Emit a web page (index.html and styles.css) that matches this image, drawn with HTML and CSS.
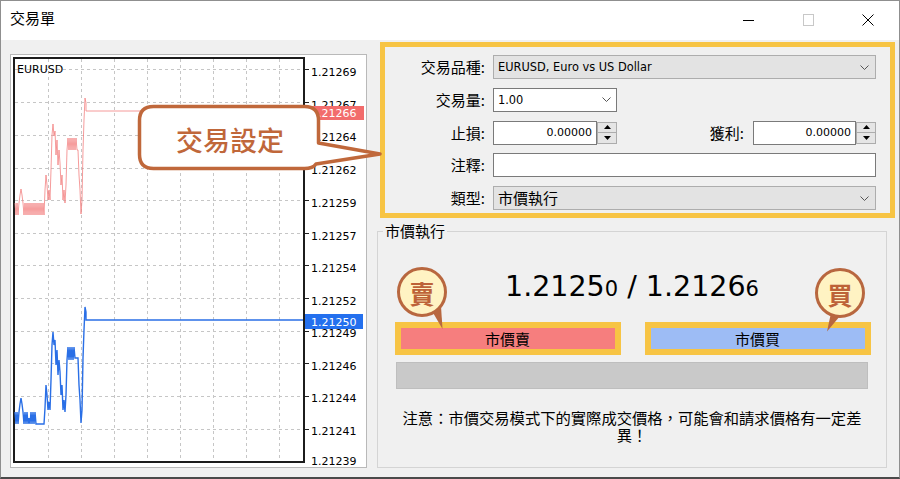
FILE: index.html
```html
<!DOCTYPE html>
<html lang="zh-Hant">
<head>
<meta charset="utf-8">
<title>交易單</title>
<link rel="stylesheet" href="styles.css">
</head>
<body>
<div class="window">
  <header class="titlebar">
    <span class="title">交易單</span>
    <div class="controls">
      <span class="ctl"><svg width="11" height="11" viewBox="0 0 11 11"><path d="M0 5.5H11" stroke="#000" stroke-width="1"/></svg></span>
      <span class="ctl"><svg width="11" height="12" viewBox="0 0 11 12"><rect x="0.5" y="0.5" width="10" height="11" fill="none" stroke="#c8c8c8"/></svg></span>
      <span class="ctl"><svg width="12" height="12" viewBox="0 0 12 12"><path d="M0.5 0.5L11.5 11.5M11.5 0.5L0.5 11.5" stroke="#000" stroke-width="1"/></svg></span>
    </div>
  </header>

  <main class="content">
    <section class="chart-panel">
      <svg class="chart" width="357" height="414" viewBox="10 54 357 414">
        <rect x="10.5" y="54.5" width="356" height="413" fill="#fff" stroke="#b9b9b9"/>
        <path class="grid" d="M48.5 59V461M81.5 59V461M114.5 59V461M147.5 59V461M180.5 59V461M213.5 59V461M246.5 59V461M279.5 59V461M15 69.5H303M15 102.5H303M15 135.5H303M15 168.5H303M15 200.5H303M15 233.5H303M15 265.5H303M15 298.5H303M15 331.5H303M15 363.5H303M15 396.5H303M15 429.5H303"/>
        <rect x="14" y="58" width="290" height="404" fill="none" stroke="#1c1c1c" stroke-width="2"/>
        <path class="ticks" d="M305 69.5H309M305 102.5H309M305 135.5H309M305 168.5H309M305 200.5H309M305 233.5H309M305 265.5H309M305 298.5H309M305 331.5H309M305 363.5H309M305 396.5H309M305 429.5H309"/>
        <text x="17" y="73">EURUSD</text>
        <polyline class="ask" points="15,203 16,215 17,203 18,215 19,203 20,195 21,189 22,195 23,203 24,215 25,203 26,215 27,203 28,215 29,203 30,215 31,203 32,215 33,203 34,215 35,203 36,215 37,203 38,215 39,203 40,215 41,203 42,215 43,203 44,215 45,190 46,175 47,185 48,200 49,190 50,200 51,170 52,135 53,124 54,136 55,131 56,155 57,140 58,165 59,150 60,163 61,185 62,175 63,200 64,190 65,203 66,185 67,150 68,138 69,150 70,138 71,150 72,138 73,150 74,138 75,150 76,138 77,150 78,150 79,175 80,190 81,214 82,200 83,150 84,120 85,98 86,103 86,111 303,111"/>
        <polyline class="bid" points="15,412 16,424 17,412 18,424 19,412 20,404 21,398 22,404 23,412 24,424 25,412 26,424 27,412 28,424 29,418 30,424 31,412 32,424 33,412 34,424 35,412 36,424 44,424 45,408 46,385 47,395 48,410 49,402 50,410 51,380 52,345 53,332 54,345 55,340 56,365 57,350 58,375 59,360 60,372 61,395 62,385 63,410 64,400 65,412 66,395 67,360 68,347 69,360 70,347 71,360 72,347 73,360 74,347 75,358 78,358 79,385 80,400 81,423 82,410 83,358 84,330 85,307 86,312 86,320 303,320"/>
        <text x="311" y="76">1.21269</text>
        <text x="311" y="109">1.21267</text>
        <text x="311" y="141">1.21264</text>
        <text x="311" y="174">1.21262</text>
        <text x="311" y="207">1.21259</text>
        <text x="311" y="240">1.21257</text>
        <text x="311" y="272">1.21254</text>
        <text x="311" y="305">1.21252</text>
        <text x="311" y="337">1.21249</text>
        <text x="311" y="370">1.21246</text>
        <text x="311" y="402">1.21244</text>
        <text x="311" y="435">1.21241</text>
        <text x="311" y="465">1.21239</text>
        <rect x="305" y="106" width="59" height="14" fill="#f26c6c"/>
        <text class="tag" x="311" y="117">1.21266</text>
        <rect x="305" y="314" width="58" height="15" fill="#2470ee"/>
        <text class="tag" x="311" y="325.5">1.21250</text>
      </svg>
    </section>

    <section class="side">
      <div class="settings">
        <label class="lbl">交易品種:</label>
        <div class="select"><span class="val">EURUSD, Euro vs US Dollar</span><svg class="chev" width="9" height="5" viewBox="0 0 9 5"><path d="M0.5 0.5L4.5 4.5L8.5 0.5" fill="none" stroke="#555"/></svg></div>

        <label class="lbl">交易量:</label>
        <div class="field"><div class="combo"><span class="val">1.00</span><svg class="chev" width="9" height="5" viewBox="0 0 9 5"><path d="M0.5 0.5L4.5 4.5L8.5 0.5" fill="none" stroke="#555"/></svg></div></div>

        <label class="lbl">止損:</label>
        <div class="field split">
          <div class="spin first"><span class="num">0.00000</span><span class="spin-btns"><span class="sb"><svg width="7" height="4" viewBox="0 0 7 4"><path d="M3.5 0L7 4H0Z" fill="#000"/></svg></span><span class="sb"><svg width="7" height="4" viewBox="0 0 7 4"><path d="M0 0H7L3.5 4Z" fill="#000"/></svg></span></span></div>
          <label class="lbl inline">獲利:</label>
          <div class="spin"><span class="num">0.00000</span><span class="spin-btns"><span class="sb"><svg width="7" height="4" viewBox="0 0 7 4"><path d="M3.5 0L7 4H0Z" fill="#000"/></svg></span><span class="sb"><svg width="7" height="4" viewBox="0 0 7 4"><path d="M0 0H7L3.5 4Z" fill="#000"/></svg></span></span></div>
        </div>

        <label class="lbl">注釋:</label>
        <div class="textbox"></div>

        <label class="lbl">類型:</label>
        <div class="select"><span class="val cjk">市價執行</span><svg class="chev" width="9" height="5" viewBox="0 0 9 5"><path d="M0.5 0.5L4.5 4.5L8.5 0.5" fill="none" stroke="#555"/></svg></div>
      </div>

      <fieldset class="group">
        <legend>市價執行</legend>
        <div class="quote">1.2125<small>0</small> / 1.2126<small>6</small></div>
        <div class="actions">
          <div class="ring"><button class="btn sell" type="button">市價賣</button></div>
          <div class="ring"><button class="btn buy" type="button">市價買</button></div>
        </div>
        <div class="progress"></div>
        <p class="note">注意：市價交易模式下的實際成交價格，可能會和請求價格有一定差異！</p>
      </fieldset>
    </section>
  </main>

  <svg class="callout" width="248" height="70" viewBox="136 103 248 70">
    <path d="M153.5 106.5H304.5Q318.5 106.5 318.5 120.5V143L380 154L316 164Q313 168.5 304.5 168.5H153.5Q139.5 168.5 139.5 154.5V120.5Q139.5 106.5 153.5 106.5Z" fill="#fff" stroke="#c0683b" stroke-width="3.5" stroke-linejoin="round"/>
    <text class="callout-text" x="230" y="139">交易設定</text>
  </svg>

  <svg class="marker sell-marker" width="56" height="68" viewBox="394 264 56 68">
    <path d="M432 311L442.5 329L441 306Z" fill="#b8673f"/>
    <circle cx="422" cy="292" r="23.5" fill="#fff3c3" stroke="#b8673f" stroke-width="3"/>
    <text class="marker-text" x="422" y="293">賣</text>
  </svg>

  <svg class="marker buy-marker" width="56" height="69" viewBox="812 265 56 69">
    <path d="M831 313L827 331.5L840 316Z" fill="#b8673f"/>
    <circle cx="840" cy="293" r="23.5" fill="#fff3c3" stroke="#b8673f" stroke-width="3"/>
    <text class="marker-text" x="840" y="294">買</text>
  </svg>
</div>
</body>
</html>
```

FILE: styles.css
```css
* { box-sizing: border-box; }

html, body {
  margin: 0;
  padding: 0;
}

body {
  width: 900px;
  height: 479px;
  overflow: hidden;
  background: #fff;
  font-family: "Noto Sans CJK TC", "Noto Sans", sans-serif;
  color: #000;
}

.window {
  position: relative;
  width: 900px;
  height: 479px;
  border: 1px solid #8f8f8f;
  border-bottom: 2px solid #4a4a4a;
  background: #f0f0f0;
  display: flex;
  flex-direction: column;
}

/* ---------- title bar ---------- */
.titlebar {
  flex: none;
  height: 39px;
  background: #fff;
  display: flex;
  justify-content: space-between;
  align-items: flex-start;
}

.title {
  padding: 7px 0 0 9px;
  font-size: 15px;
  line-height: 20px;
}

.controls {
  display: flex;
  padding-top: 13px;
  padding-right: 1px;
}

.ctl {
  width: 60px;
  height: 12px;
  display: flex;
  align-items: center;
  justify-content: center;
}

.ctl svg { display: block; }

/* ---------- content ---------- */
.content {
  flex: 1;
  display: flex;
  align-items: flex-start;
}

.chart-panel {
  flex: none;
  width: 357px;
  height: 414px;
  margin: 14px 0 0 9px;
}

.chart { display: block; }

.chart text {
  font-family: "DejaVu Sans", sans-serif;
  font-size: 11px;
  fill: #000;
}

.chart text.tag { fill: #fff; }

.grid {
  stroke: #c6c6c6;
  stroke-width: 1;
  stroke-dasharray: 3 3;
  fill: none;
}

.ticks {
  stroke: #222;
  stroke-width: 1;
}

.ask {
  fill: none;
  stroke: #f28282;
  stroke-width: 0.8;
}

.bid {
  fill: none;
  stroke: #2a6fe6;
  stroke-width: 1.4;
}

/* ---------- right side ---------- */
.side {
  flex: none;
  width: 518px;
  margin-left: 10px;
}

.settings {
  width: 515px;
  height: 176px;
  margin: 2px 0 0 3px;
  border: 5px solid #f7c444;
  padding: 8px 14px 0 0;
  display: grid;
  grid-template-columns: 100px 1fr;
  grid-auto-rows: 24px;
  column-gap: 8px;
  row-gap: 8.75px;
}

.lbl {
  font-size: 15px;
  line-height: 24px;
  text-align: right;
  white-space: nowrap;
}

.val {
  font-family: "DejaVu Sans", sans-serif;
  font-size: 11.4px;
  line-height: 22px;
  padding-left: 4px;
}

.val.cjk {
  font-family: "Noto Sans CJK TC", sans-serif;
  font-size: 15px;
}

.chev { display: block; flex: none; }

.select {
  display: flex;
  align-items: center;
  justify-content: space-between;
  background: #e3e3e3;
  border: 1px solid #adadad;
  padding-right: 6px;
}

.field { display: flex; }

.combo {
  width: 124px;
  display: flex;
  align-items: center;
  justify-content: space-between;
  background: #fff;
  border: 1px solid #7a7a7a;
  padding-right: 5px;
}

.split { align-items: stretch; }

.split .lbl.inline {
  flex: 1;
  padding-right: 9px;
}

.spin {
  width: 123px;
  display: flex;
  align-items: stretch;
}

.spin.first { width: 124px; }

.num {
  flex: 1;
  background: #fff;
  border: 1px solid #7a7a7a;
  font-family: "DejaVu Sans", sans-serif;
  font-size: 11px;
  line-height: 22px;
  text-align: right;
  padding-right: 4px;
}

.spin-btns {
  flex: none;
  width: 20px;
  margin: 1px 0;
  display: flex;
  flex-direction: column;
  border: 1px solid #acacac;
  background: #e5e5e5;
}

.sb {
  flex: 1;
  display: flex;
  align-items: center;
  justify-content: center;
}

.sb + .sb { border-top: 1px solid #acacac; }

.sb svg { display: block; }

.textbox {
  background: #fff;
  border: 1px solid #7a7a7a;
}

/* ---------- market execution group ---------- */
.group {
  width: 510px;
  height: 247px;
  margin: 3px 0 0 0;
  padding: 0;
  min-width: 0;
  border: 1px solid #d4d4d4;
}

.group legend {
  margin-left: 5px;
  padding: 0 2px;
  font-size: 15px;
  line-height: 20px;
}

.quote {
  margin-top: 28px;
  height: 36px;
  text-align: center;
  font-family: "DejaVu Sans", sans-serif;
  font-size: 28.5px;
  line-height: 36px;
  white-space: nowrap;
}

.quote small {
  font-size: 21px;
  line-height: 20px;
}

.actions {
  margin-top: 17px;
  display: flex;
  justify-content: center;
  gap: 24px;
  padding-left: 1px;
}

.ring {
  flex: none;
  width: 226px;
  height: 33px;
  border: 6px solid #f7c444;
}

.btn {
  display: block;
  width: 100%;
  height: 100%;
  margin: 0;
  padding: 0;
  border: 0;
  font-family: "Noto Sans CJK TC", sans-serif;
  font-size: 15px;
  line-height: 21px;
  color: #000;
  text-align: center;
}

.btn.sell { background: #f67e7e; }
.btn.buy { background: #9dbcf5; }

.progress {
  width: 472px;
  height: 27px;
  margin: 7px auto 0;
  background: #c9c9c9;
  border: 1px solid #bebebe;
}

.note {
  width: 470px;
  margin: 19.5px auto 0;
  text-align: center;
  font-size: 15.3px;
  line-height: 17px;
}

/* ---------- annotation overlays ---------- */
.callout {
  position: absolute;
  left: 135px;
  top: 102px;
  overflow: visible;
}

.callout-text {
  font-family: "Noto Sans CJK TC", sans-serif;
  font-size: 27px;
  font-weight: 500;
  fill: #c0673a;
  text-anchor: middle;
  dominant-baseline: central;
}

.marker {
  position: absolute;
  overflow: visible;
}

.sell-marker { left: 393px; top: 263px; }
.buy-marker { left: 811px; top: 264px; }

.marker-text {
  font-family: "Noto Sans CJK TC", sans-serif;
  font-size: 25px;
  font-weight: 700;
  fill: #bd6238;
  text-anchor: middle;
  dominant-baseline: central;
}
```
